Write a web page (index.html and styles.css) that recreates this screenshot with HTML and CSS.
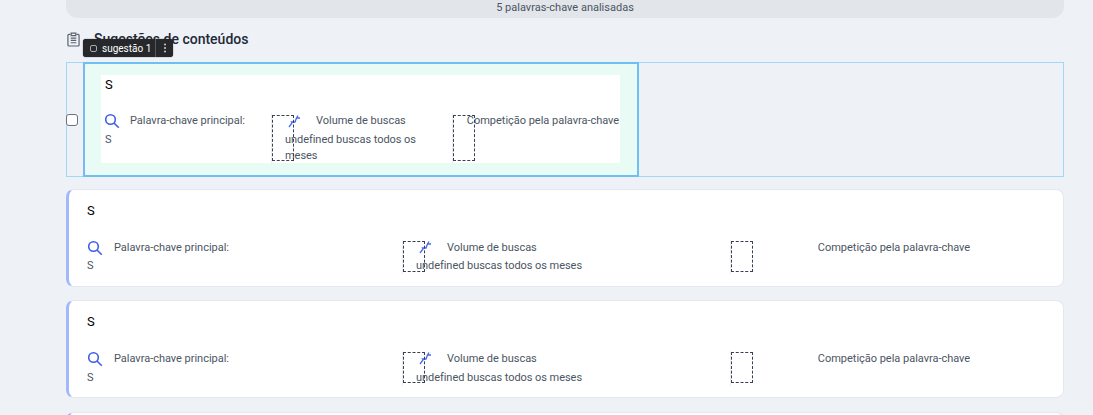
FILE: index.html
```html
<!DOCTYPE html>
<html lang="pt">
<head>
<meta charset="utf-8">
<title>Sugestões de conteúdos</title>
<link rel="stylesheet" href="styles.css">
</head>
<body>
<main class="page">
  <div class="pill">5 palavras-chave analisadas</div>
  <h2 class="heading">
    <svg class="clip" viewBox="0 0 14 16" width="13" height="15"><path d="M3.5 2.5H2a1 1 0 0 0-1 1V14a1 1 0 0 0 1 1h10a1 1 0 0 0 1-1V3.5a1 1 0 0 0-1-1h-1.5M4.5 1.2h5v2.6h-5zM4 6.5h6M4 9h6M4 11.5h6" fill="none" stroke="#5b6470" stroke-width="1.3"/></svg>
    <span>Sugestões de conteúdos</span>
  </h2>
  <div class="toolbar">
    <span class="tool-square"></span>
    <span class="tool-name">sugestão 1</span>
    <span class="tool-more">
      <svg viewBox="0 0 4 10" width="4" height="10"><circle cx="2" cy="1.5" r="1" fill="#cfcfcf"/><circle cx="2" cy="5" r="1" fill="#cfcfcf"/><circle cx="2" cy="8.5" r="1" fill="#cfcfcf"/></svg>
    </span>
  </div>

  <section class="selected-row">
    <input class="check" type="checkbox" aria-label="selecionar">
    <article class="selected-card">
      <div class="selected-fill">
        <div class="selected-inner">
          <h3 class="title">S</h3>
          <div class="metrics metrics-narrow">
            <div class="metric metric-first">
              <div class="label"><svg class="search" viewBox="0 0 16 16" width="16" height="16"><circle cx="6.5" cy="6.5" r="4.8" fill="none" stroke="#3d5fe8" stroke-width="1.6"/><path d="M10 10l4.8 4.8" stroke="#3d5fe8" stroke-width="1.6"/></svg><span>Palavra-chave principal:</span></div>
              <p class="value">S</p>
            </div>
            <div class="metric metric-mid">
              <span class="dashed"></span>
              <div class="label label-vol"><svg class="trend" viewBox="0 0 12 13" width="12" height="13"><path d="M1 12l3-4-.5-1H7l1.500-4H12M8.500 3l1.500-2.500" fill="none" stroke="#4a67f0" stroke-width="1.300"/></svg><span>Volume de buscas</span></div>
              <p class="value">undefined buscas todos os meses</p>
            </div>
            <div class="metric metric-last">
              <span class="dashed"></span>
              <div class="label label-comp"><span>Competição pela palavra-chave</span></div>
            </div>
          </div>
        </div>
      </div>
    </article>
  </section>

  <article class="card">
    <h3 class="title">S</h3>
    <div class="metrics metrics-wide">
      <div class="metric metric-first">
        <div class="label"><svg class="search" viewBox="0 0 16 16" width="16" height="16"><circle cx="6.5" cy="6.5" r="4.8" fill="none" stroke="#3d5fe8" stroke-width="1.6"/><path d="M10 10l4.8 4.8" stroke="#3d5fe8" stroke-width="1.6"/></svg><span>Palavra-chave principal:</span></div>
        <p class="value">S</p>
      </div>
      <div class="metric metric-mid">
        <span class="dashed"></span>
        <div class="label label-vol"><svg class="trend" viewBox="0 0 12 13" width="12" height="13"><path d="M1 12l3-4-.5-1H7l1.500-4H12M8.500 3l1.500-2.500" fill="none" stroke="#4a67f0" stroke-width="1.300"/></svg><span>Volume de buscas</span></div>
        <p class="value">undefined buscas todos os meses</p>
      </div>
      <div class="metric metric-last">
        <span class="dashed"></span>
        <div class="label label-comp"><span>Competição pela palavra-chave</span></div>
      </div>
    </div>
  </article>

  <article class="card">
    <h3 class="title">S</h3>
    <div class="metrics metrics-wide">
      <div class="metric metric-first">
        <div class="label"><svg class="search" viewBox="0 0 16 16" width="16" height="16"><circle cx="6.5" cy="6.5" r="4.8" fill="none" stroke="#3d5fe8" stroke-width="1.6"/><path d="M10 10l4.8 4.8" stroke="#3d5fe8" stroke-width="1.6"/></svg><span>Palavra-chave principal:</span></div>
        <p class="value">S</p>
      </div>
      <div class="metric metric-mid">
        <span class="dashed"></span>
        <div class="label label-vol"><svg class="trend" viewBox="0 0 12 13" width="12" height="13"><path d="M1 12l3-4-.5-1H7l1.500-4H12M8.500 3l1.500-2.500" fill="none" stroke="#4a67f0" stroke-width="1.300"/></svg><span>Volume de buscas</span></div>
        <p class="value">undefined buscas todos os meses</p>
      </div>
      <div class="metric metric-last">
        <span class="dashed"></span>
        <div class="label label-comp"><span>Competição pela palavra-chave</span></div>
      </div>
    </div>
  </article>

  <article class="card"></article>
</main>
</body>
</html>
```
FILE: styles.css
```css
* { box-sizing: border-box; }
html, body { height: 415px; overflow: hidden; }
body {
  margin: 0;
  background: #eef1f6;
  font-family: Roboto, "Liberation Sans", sans-serif;
  color: #4b5563;
}
.page {
  position: relative;
  width: 998px;
  height: 415px;
  overflow: hidden;
  margin-left: 66px;
  display: flex;
  flex-direction: column;
}
.pill {
  flex: none;
  height: 18px;
  margin-bottom: 12px;
  background: #e2e5ea;
  border-radius: 0 0 12px 12px;
  text-align: center;
  font-size: 11px;
  line-height: 15px;
  color: #4b5563;
}
.heading {
  flex: none;
  display: flex;
  align-items: center;
  gap: 14px;
  height: 18px;
  margin: 0 0 14px;
  padding-left: 1px;
  font-size: 14px;
  font-weight: 500;
  color: #1f2937;
}
.toolbar {
  position: absolute;
  left: 17px;
  top: 39px;
  width: 90px;
  height: 18px;
  display: flex;
  align-items: center;
  background: #26282b;
  border-radius: 3px;
  color: #fff;
  font-size: 10px;
  box-shadow: 0 0 1px #000;
}
.tool-square {
  width: 7px;
  height: 7px;
  margin: 0 5px 0 7px;
  border: 1px solid #a9a9a9;
  border-radius: 2px;
}
.tool-name { flex: 1; white-space: nowrap; }
.tool-more {
  width: 18px;
  height: 18px;
  display: flex;
  align-items: center;
  justify-content: center;
  border-left: 1px solid #55585c;
}
.selected-row {
  flex: none;
  display: flex;
  align-items: center;
  height: 115px;
  margin-bottom: 12px;
  border: 1px solid #a3d7f7;
}
.check {
  flex: none;
  width: 12px;
  height: 12px;
  margin: 0 5px 0 -1px;
  appearance: none;
  background: #fff;
  border: 1px solid #6b7280;
  border-radius: 3px;
}
.selected-card {
  flex: none;
  width: 556px;
  height: 115px;
  margin-top: -1px;
  margin-bottom: -1px;
  border: 2px solid #6fc0f2;
  border-left-color: #7db7f2;
}
.selected-fill {
  height: 100%;
  padding: 11px 17px 12px 16px;
  background: #e9fbf5;
  border-radius: 6px 0 0 6px;
}
.selected-inner {
  height: 88px;
  background: #fff;
}
.selected-inner .title { padding: 2px 0 0 4px; height: 18px; margin-bottom: 20px; }
.selected-inner .metric-first { padding-left: 4px; }
.card {
  flex: none;
  height: 97.5px;
  margin-bottom: 13.8px;
  padding: 13px 19px 0 18px;
  background: #fff;
  border: 1px solid #e3e7ee;
  border-left: 3px solid #a3b8fb;
  border-radius: 8px;
}
.title {
  margin: 0 0 20.5px;
  height: 16px;
  font-size: 13px;
  line-height: 16px;
  font-weight: 400;
  color: #000;
}
.metrics { display: grid; }
.metrics-wide { grid-template-columns: 315px 328px 1fr; }
.metrics-narrow { grid-template-columns: 170px 181px 1fr; }
.metrics-narrow .metric-mid { padding-right: 16px; }
.metric { position: relative; }
.metric-mid, .metric-last {
  padding-left: 13px;
  border-left: 1px solid #eceef2;
}
.dashed {
  position: absolute;
  left: 0;
  top: 1.5px;
  width: 22px;
  height: 31px;
  border: 1px dashed #374151;
}
.metrics-narrow .dashed { top: 2px; height: 46px; }
.label {
  display: flex;
  align-items: center;
  height: 16px;
  font-size: 11px;
  line-height: 16px;
  white-space: nowrap;
  letter-spacing: -.02px;
}
.search { margin-right: 11px; }
.metrics-narrow .search { margin: 0 10px 0 -1px; }
.label-vol .trend { margin: 0 16px 0 3px; }
.label-comp { justify-content: center; }
.value {
  margin: 2.8px 0 0;
  font-size: 11px;
  line-height: 16px;
  letter-spacing: -.05px;
}
```
